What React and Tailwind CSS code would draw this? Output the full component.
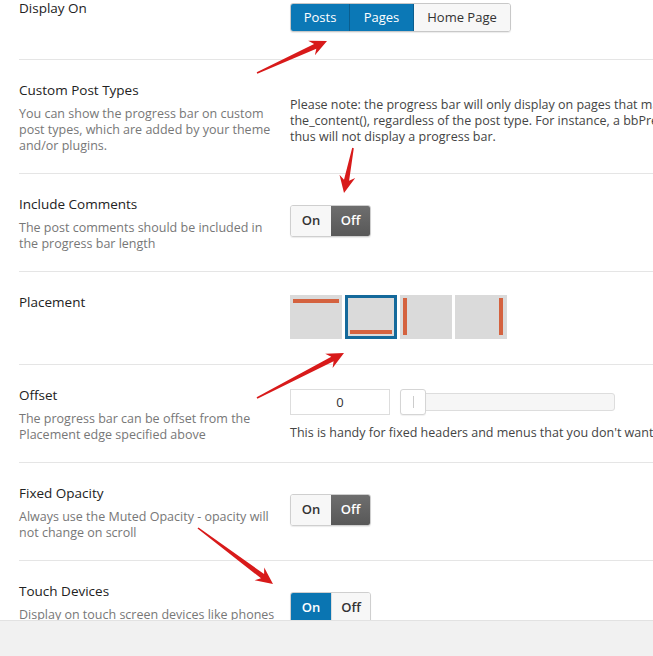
import { useState } from "react";

function arrowPoints(x1, y1, x2, y2) {
  const dx = x2 - x1;
  const dy = y2 - y1;
  const len = Math.sqrt(dx * dx + dy * dy);
  const ux = dx / len;
  const uy = dy / len;
  const nx = -uy;
  const ny = ux;
  const L = 17;
  const bx = x2 - ux * L;
  const by = y2 - uy * L;
  const nbx = x2 - ux * (L - 4);
  const nby = y2 - uy * (L - 4);
  const p = (x, y) => `${x.toFixed(1)},${y.toFixed(1)}`;
  return [
    p(x1 + nx * 0.8, y1 + ny * 0.8),
    p(nbx + nx * 2.6, nby + ny * 2.6),
    p(bx + nx * 8, by + ny * 8),
    p(x2, y2),
    p(bx - nx * 8, by - ny * 8),
    p(nbx - nx * 2.6, nby - ny * 2.6),
    p(x1 - nx * 0.8, y1 - ny * 0.8),
  ].join(" ");
}

const arrows = [
  [257, 73, 327, 41],
  [353, 148, 344, 193],
  [257, 398, 344, 353],
  [198, 528, 273, 584],
];

function Toggle({ on, onChange }) {
  return (
    <div className="flex h-[32px] w-[81px] rounded-[3px] overflow-hidden border border-[#cfcfcf] text-[13px] font-semibold shadow-[0_1px_1px_rgba(0,0,0,0.08)]">
      <button
        onClick={() => onChange(true)}
        className={
          on
            ? "w-[40px] bg-[#0a75b2] text-white"
            : "w-[40px] bg-[#f7f7f7] text-[#333]"
        }
      >
        On
      </button>
      <button
        onClick={() => onChange(false)}
        className={
          on
            ? "flex-1 bg-[#f7f7f7] text-[#333] border-l border-[#ddd]"
            : "flex-1 bg-gradient-to-b from-[#6e6e6e] to-[#585858] text-white"
        }
      >
        Off
      </button>
    </div>
  );
}

function Row({ title, desc, height, children, first }) {
  return (
    <div
      className={
        "flex border-b border-[#e5e5e5] " +
        (first ? "pt-0 " : "pt-[22px] ") +
        height
      }
    >
      <div className="w-[271px] shrink-0">
        <div className="text-[13.5px] leading-4 text-[#222]">{title}</div>
        {desc && (
          <div className="mt-[8px] text-[12.5px] leading-4 text-[#777]">{desc}</div>
        )}
      </div>
      <div className="flex-1 min-w-0">{children}</div>
    </div>
  );
}

export default function App() {
  const [display, setDisplay] = useState({ posts: true, pages: true, home: false });
  const [comments, setComments] = useState(false);
  const [placement, setPlacement] = useState(1);
  const [offset, setOffset] = useState(0);
  const [fixedOp, setFixedOp] = useState(false);
  const [touch, setTouch] = useState(true);

  const btn = (active) =>
    active
      ? "whitespace-nowrap bg-[#0b78b6] text-white border-r border-[#0a5e8f]"
      : "whitespace-nowrap bg-[#f7f7f7] text-[#333]";

  return (
    <div
      className="relative w-[653px] h-[656px] overflow-hidden bg-white"
      style={{ fontFamily: '"Open Sans", "Noto Sans", sans-serif' }}
    >
      <div className="h-[620px] overflow-hidden pl-[19px]">
        <Row title="Display On" height="h-[60px]" first>
          <div className="mt-[3px] inline-flex h-[29px] rounded-[3px] overflow-hidden border border-[#c8c8c8] text-[13px] shadow-[0_1px_1px_rgba(0,0,0,0.08)]">
            <button
              onClick={() => setDisplay({ ...display, posts: !display.posts })}
              className={btn(display.posts) + " w-[59px]"}
            >
              Posts
            </button>
            <button
              onClick={() => setDisplay({ ...display, pages: !display.pages })}
              className={btn(display.pages) + " w-[64px]"}
            >
              Pages
            </button>
            <button
              onClick={() => setDisplay({ ...display, home: !display.home })}
              className={btn(display.home) + " w-[96px]"}
            >
              Home Page
            </button>
          </div>
        </Row>

        <Row
          title="Custom Post Types"
          height="h-[114px]"
          desc={
            <>
              You can show the progress bar on custom
              <br />
              post types, which are added by your theme
              <br />
              and/or plugins.
            </>
          }
        >
          <div className="mt-[15px] whitespace-nowrap text-[12.5px] leading-4 text-[#444]">
            Please note: the progress bar will only display on pages that make use of
            <br />
            the_content(), regardless of the post type. For instance, a bbPress forum does not use
            <br />
            thus will not display a progress bar.
          </div>
        </Row>

        <Row
          title="Include Comments"
          height="h-[98px]"
          desc={
            <>
              The post comments should be included in
              <br />
              the progress bar length
            </>
          }
        >
          <div className="mt-[9px]">
            <Toggle on={comments} onChange={setComments} />
          </div>
        </Row>

        <Row title="Placement" height="h-[93px]">
          <div className="mt-[1px] flex gap-[3px]">
            {[0, 1, 2, 3].map((i) => (
              <button
                key={i}
                onClick={() => setPlacement(i)}
                className={
                  "relative h-[44px] w-[52px] bg-[#dadada] " +
                  (placement === i ? "border-[3px] border-[#14699b]" : "")
                }
              >
                {i === 0 && (
                  <span className="absolute left-[3px] right-[3px] top-[4px] h-[4px] bg-[#d4623f]" />
                )}
                {i === 1 && (
                  <span className="absolute left-[2px] right-[2px] bottom-[2px] h-[4px] bg-[#d4623f]" />
                )}
                {i === 2 && (
                  <span className="absolute left-[3px] top-[3px] bottom-[4px] w-[4px] bg-[#d4623f]" />
                )}
                {i === 3 && (
                  <span className="absolute right-[4px] top-[3px] bottom-[4px] w-[4px] bg-[#d4623f]" />
                )}
              </button>
            ))}
          </div>
        </Row>

        <Row
          title="Offset"
          height="h-[98px]"
          desc={
            <>
              The progress bar can be offset from the
              <br />
              Placement edge specified above
            </>
          }
        >
          <div className="mt-[2px] flex items-center gap-[10px]">
            <input
              value={offset}
              onChange={(e) => setOffset(e.target.value)}
              className="h-[26px] w-[100px] border border-[#ddd] text-center text-[13px] text-[#333] outline-none"
            />
            <div className="relative h-[18px] w-[215px] rounded-[3px] border border-[#ddd] bg-[#f6f6f6]">
              <div className="absolute left-[-1px] top-[-5px] flex h-[26px] w-[26px] items-center justify-center rounded-[3px] border border-[#d5d5d5] bg-white shadow-[0_1px_1px_rgba(0,0,0,0.06)]">
                <span className="h-[12px] w-px bg-[#ccc]" />
              </div>
            </div>
          </div>
          <div className="mt-[10px] whitespace-nowrap text-[12.5px] leading-4 text-[#444]">
            This is handy for fixed headers and menus that you don't want covered by the progress bar.
          </div>
        </Row>

        <Row
          title="Fixed Opacity"
          height="h-[98px]"
          desc={
            <>
              Always use the Muted Opacity - opacity will
              <br />
              not change on scroll
            </>
          }
        >
          <div className="mt-[9px]">
            <Toggle on={fixedOp} onChange={setFixedOp} />
          </div>
        </Row>

        <Row
          title="Touch Devices"
          height="h-[98px]"
          desc={<>Display on touch screen devices like phones</>}
        >
          <div className="mt-[9px]">
            <Toggle on={touch} onChange={setTouch} />
          </div>
        </Row>
      </div>

      <div className="h-[36px] border-t border-[#e2e2e2] bg-[#f1f1f1]" />

      <svg className="pointer-events-none absolute left-0 top-0" width="653" height="656">
        {arrows.map((a, i) => (
          <polygon key={i} points={arrowPoints(...a)} fill="#d81a1a" />
        ))}
      </svg>
    </div>
  );
}
